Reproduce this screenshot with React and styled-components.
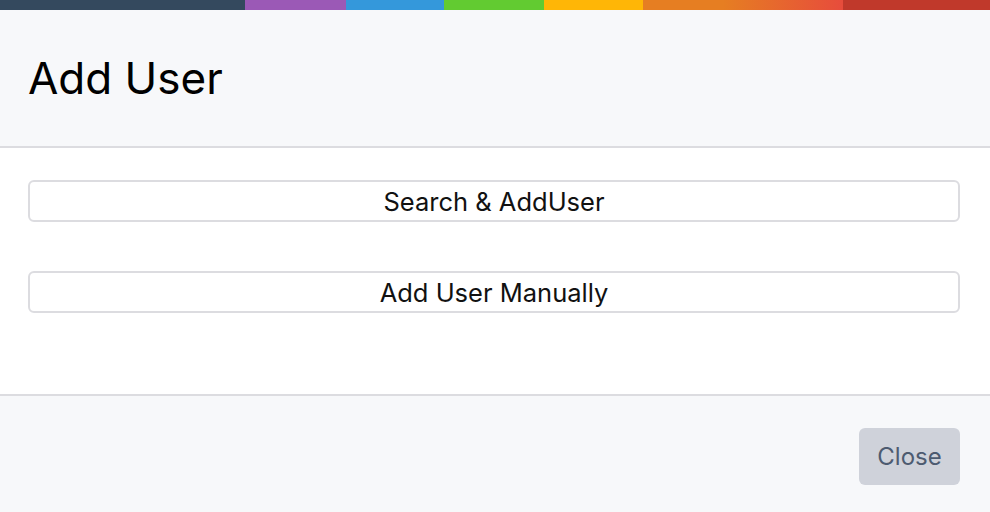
import React from "react";
import styled, { createGlobalStyle } from "styled-components";

const Global = createGlobalStyle`
  html, body { margin: 0; padding: 0; background: #ffffff; }
  body { font-family: Inter, "Noto Sans", sans-serif; color: #000; }
`;

const Modal = styled.div`
  width: 990px;
  height: 512px;
  display: flex;
  flex-direction: column;
  overflow: hidden;
`;

const Stripe = styled.div`
  height: 10px;
  display: flex;
  flex-shrink: 0;
`;

const Seg = styled.div`
  width: ${(p) => p.$w}px;
  background: ${(p) => p.$bg};
`;

const Header = styled.div`
  height: 136px;
  background: #f7f8fa;
  border-bottom: 2px solid #dcdce0;
  display: flex;
  align-items: center;
  padding: 0 28px;
  flex-shrink: 0;
`;

const Title = styled.h1`
  margin: 0;
  font-weight: 400;
  font-size: 44px;
  line-height: 1.2;
  color: #000;
`;

const Body = styled.div`
  background: #fff;
  padding: 32px 30px 0 28px;
  height: 246px;
  display: flex;
  flex-direction: column;
  gap: 49px;
  flex-shrink: 0;
  box-sizing: border-box;
`;

const OptionButton = styled.button`
  height: 42px;
  width: 100%;
  background: #fff;
  border: 2px solid #dcdce0;
  border-radius: 6px;
  font-family: Inter, "Noto Sans", sans-serif;
  font-size: 25.5px;
  color: #111;
  display: flex;
  align-items: center;
  justify-content: center;
  padding: 0;
`;

const Footer = styled.div`
  flex: 1;
  background: #f7f8fa;
  border-top: 2px solid #dcdce0;
  display: flex;
  align-items: center;
  justify-content: flex-end;
  padding: 5px 30px 0 0;
`;

const CloseButton = styled.button`
  width: 101px;
  height: 57px;
  background: #cfd2da;
  border: none;
  border-radius: 6px;
  font-family: Inter, "Noto Sans", sans-serif;
  font-size: 24px;
  color: #4d5b70;
`;

const segs = [
  { w: 245, bg: "#34495e" },
  { w: 101, bg: "#9b59b6" },
  { w: 98, bg: "#3498db" },
  { w: 100, bg: "#62cb31" },
  { w: 99, bg: "#ffb606" },
  { w: 200, bg: "linear-gradient(to right, #e67e22 0%, #e67e22 40%, #e74c3c 100%)" },
  { w: 147, bg: "#c0392b" },
];

export default function App() {
  return (
    <>
      <Global />
      <Modal>
        <Stripe>
          {segs.map((s, i) => (
            <Seg key={i} $w={s.w} $bg={s.bg} />
          ))}
        </Stripe>
        <Header>
          <Title>Add User</Title>
        </Header>
        <Body>
          <OptionButton>Search &amp; AddUser</OptionButton>
          <OptionButton>Add User Manually</OptionButton>
        </Body>
        <Footer>
          <CloseButton>Close</CloseButton>
        </Footer>
      </Modal>
    </>
  );
}
